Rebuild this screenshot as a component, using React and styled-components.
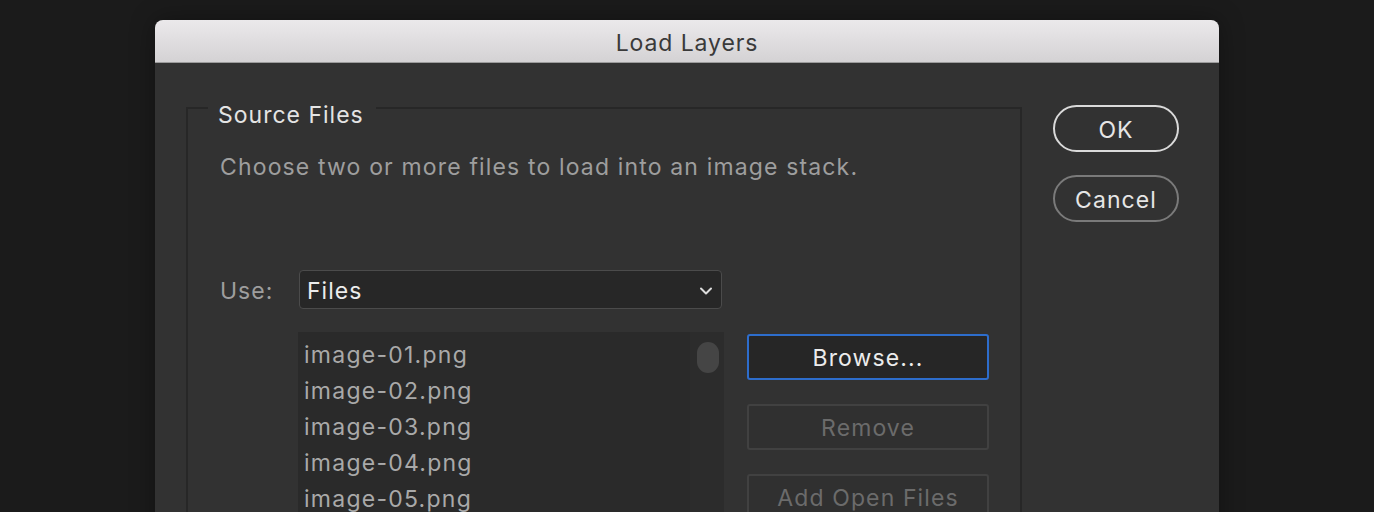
import React from "react";
import styled, { createGlobalStyle } from "styled-components";

const Global = createGlobalStyle`
  html, body { margin: 0; padding: 0; background: #1b1b1b; overflow: hidden; }
  body { font-family: Inter, "Open Sans", "Liberation Sans", sans-serif; }
  * { box-sizing: border-box; }
`;

const Page = styled.div`
  width: 1374px;
  height: 512px;
  padding: 20px 0 0 155px;
  background: #1b1b1b;
  overflow: hidden;
`;

const Dialog = styled.div`
  width: 1064px;
  height: 560px;
  border-radius: 8px 8px 0 0;
  background: #323232;
  box-shadow: 0 0 24px rgba(0, 0, 0, 0.35);
  overflow: hidden;
`;

const TitleBar = styled.div`
  height: 43px;
  display: flex;
  align-items: center;
  justify-content: center;
  padding-top: 3px;
  background: linear-gradient(#ebe9eb, #d4d2d4);
  border-bottom: 1px solid #9c9c9c;
  color: #3a3a3a;
  font-size: 23px;
  letter-spacing: 0.9px;
`;

const Body = styled.div`
  display: flex;
  gap: 31px;
  padding: 23px 0 0 31px;
`;

const Group = styled.fieldset`
  width: 836px;
  height: 480px;
  margin: 0;
  padding: 0;
  border: 2px solid #272727;
  min-width: 0;
`;

const Legend = styled.legend`
  margin-left: 20px;
  padding: 15px 12px 0 10px;
  line-height: 28px;
  font-size: 23px;
  color: #e4e4e4;
  letter-spacing: 1px;
`;

const Content = styled.div`
  padding: 22px 0 0 32px;
`;

const Description = styled.div`
  font-size: 23px;
  line-height: 32px;
  color: #9e9e9e;
  letter-spacing: 1.15px;
`;

const UseRow = styled.div`
  margin-top: 87px;
  display: flex;
  align-items: center;
`;

const Label = styled.span`
  width: 79px;
  padding-top: 3px;
  font-size: 23px;
  color: #9e9e9e;
  letter-spacing: 1px;
`;

const Select = styled.div`
  width: 423px;
  height: 39px;
  display: flex;
  align-items: center;
  justify-content: space-between;
  padding: 3px 8px 0 7px;
  background: #272727;
  border: 1px solid #4b4b4b;
  border-radius: 4px;
  color: #ececec;
  font-size: 23px;
  letter-spacing: 1px;
`;

const FilesRow = styled.div`
  margin-top: 23px;
  margin-left: 78px;
  display: flex;
  gap: 23px;
  align-items: flex-start;
`;

const List = styled.div`
  width: 426px;
  height: 220px;
  display: flex;
  background: #2a2a2a;
`;

const Items = styled.div`
  flex: 1;
  padding: 5px 0 0 6px;
`;

const Item = styled.div`
  font-size: 23px;
  line-height: 36px;
  color: #a9a9a9;
  letter-spacing: 1.25px;
`;

const Track = styled.div`
  width: 34px;
  padding: 10px 5px 0 7px;
  background: #2c2c2c;
`;

const Thumb = styled.div`
  width: 22px;
  height: 31px;
  border-radius: 11px;
  background: #454545;
`;

const SideButtons = styled.div`
  display: flex;
  flex-direction: column;
  gap: 24px;
  margin-top: 2px;
`;

const RectButton = styled.div`
  width: 242px;
  height: 46px;
  display: flex;
  align-items: center;
  justify-content: center;
  padding-top: 2px;
  font-size: 23px;
  border-radius: 3px;
  border: ${(p) => (p.$focused ? "2px solid #2d6dcc" : "2px solid #414141")};
  background: ${(p) => (p.$focused ? "#262626" : "#303030")};
  color: ${(p) => (p.$focused ? "#ececec" : "#6b6b6b")};
  letter-spacing: 1.1px;
`;

const DialogButtons = styled.div`
  display: flex;
  flex-direction: column;
  gap: 23px;
  margin-top: 19px;
`;

const PillButton = styled.div`
  width: 126px;
  height: 47px;
  display: flex;
  align-items: center;
  justify-content: center;
  padding-top: 2px;
  border-radius: 24px;
  border: 2px solid ${(p) => (p.$primary ? "#dadada" : "#7a7a7a")};
  color: #e6e6e6;
  font-size: 23px;
  letter-spacing: 1.1px;
`;

const Chevron = () => (
  <svg width="14" height="10" viewBox="0 0 14 10">
    <path d="M2 2.5 L7 7.5 L12 2.5" fill="none" stroke="#dcdcdc" strokeWidth="2" strokeLinecap="round" strokeLinejoin="round" />
  </svg>
);

export default function App() {
  const files = ["image-01.png", "image-02.png", "image-03.png", "image-04.png", "image-05.png", "image-06.png"];
  return (
    <>
      <Global />
      <Page>
        <Dialog>
          <TitleBar>Load Layers</TitleBar>
          <Body>
            <Group>
              <Legend>Source Files</Legend>
              <Content>
                <Description>Choose two or more files to load into an image stack.</Description>
                <UseRow>
                  <Label>Use:</Label>
                  <Select>
                    <span>Files</span>
                    <Chevron />
                  </Select>
                </UseRow>
                <FilesRow>
                  <List>
                    <Items>
                      {files.map((f) => (
                        <Item key={f}>{f}</Item>
                      ))}
                    </Items>
                    <Track>
                      <Thumb />
                    </Track>
                  </List>
                  <SideButtons>
                    <RectButton $focused>Browse...</RectButton>
                    <RectButton>Remove</RectButton>
                    <RectButton>Add Open Files</RectButton>
                  </SideButtons>
                </FilesRow>
              </Content>
            </Group>
            <DialogButtons>
              <PillButton $primary>OK</PillButton>
              <PillButton>Cancel</PillButton>
            </DialogButtons>
          </Body>
        </Dialog>
      </Page>
    </>
  );
}
